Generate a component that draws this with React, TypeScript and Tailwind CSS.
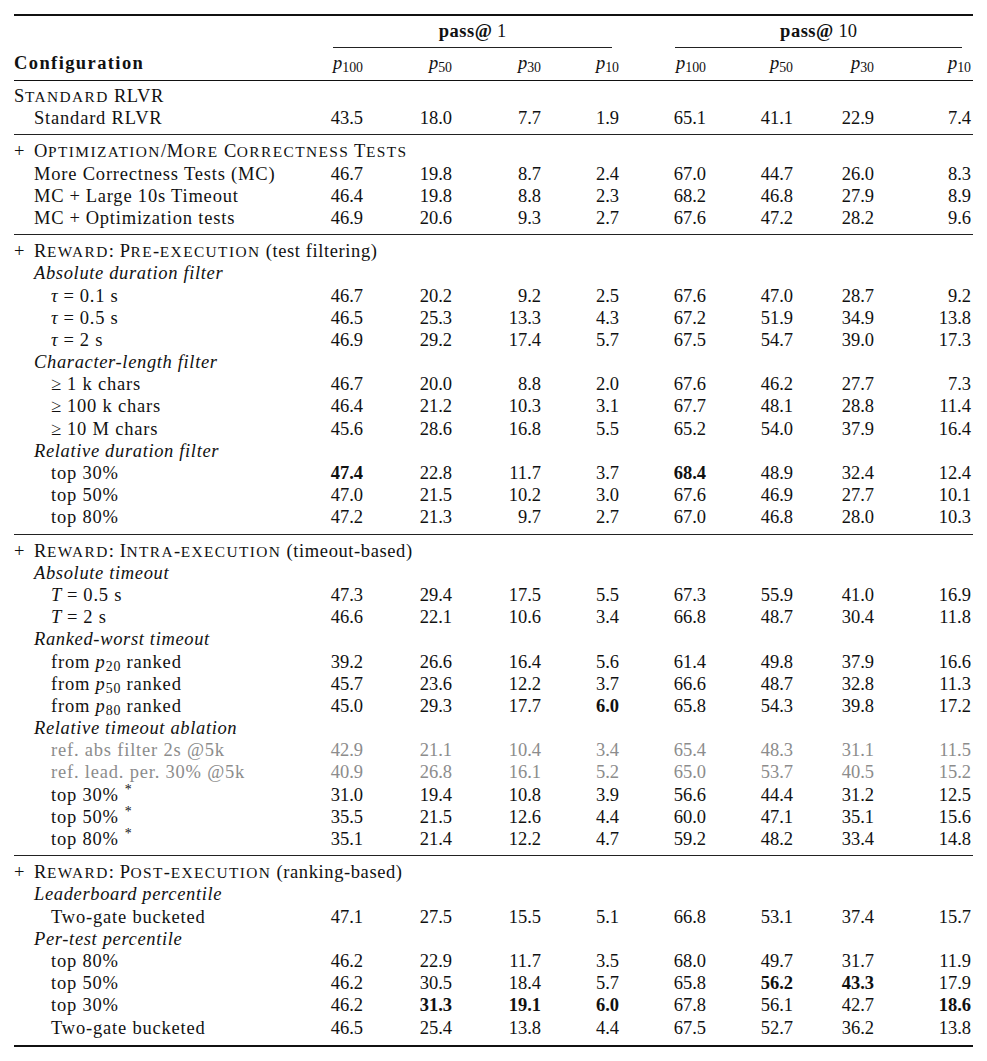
import type { ReactNode } from 'react';

type Row =
  | { k: 'sec'; label: ReactNode }
  | { k: 'sub'; label: string }
  | { k: 'row'; lvl: 1 | 2; label: ReactNode; v: string[]; gray?: boolean };

// small caps the way LaTeX \textsc draws them: lowercase letters become smaller capitals
const SC = ({ text }: { text: string }) => {
  const parts: { s: string; small: boolean }[] = [];
  for (const ch of text) {
    const small = ch !== ch.toUpperCase();
    const last = parts[parts.length - 1];
    if (last && last.small === small) last.s += ch;
    else parts.push({ s: ch, small });
  }
  return (
    <>
      {parts.map((p, i) =>
        p.small ? (
          <span key={i} className="text-[15.4px] tracking-[1.4px]">
            {p.s.toUpperCase()}
          </span>
        ) : (
          <span key={i}>{p.s}</span>
        )
      )}
    </>
  );
};

const Plus = () => <span className="mr-[9px]">+</span>;
const Eq = ({ c }: { c: string }) => <span className="mx-[5px]">{c}</span>;
const P = ({ n }: { n: string }) => (
  <span>
    <i>p</i>
    <sub>{n}</sub>
  </span>
);
const Star = () => <sup className="ml-[6px]">*</sup>;

const rows: Row[][] = [
  [
    { k: 'sec', label: <SC text="Standard RLVR" /> },
    { k: 'row', lvl: 1, label: 'Standard RLVR', v: ['43.5', '18.0', '7.7', '1.9', '65.1', '41.1', '22.9', '7.4'] },
  ],
  [
    { k: 'sec', label: <><Plus /><SC text="Optimization/More Correctness Tests" /></> },
    { k: 'row', lvl: 1, label: 'More Correctness Tests (MC)', v: ['46.7', '19.8', '8.7', '2.4', '67.0', '44.7', '26.0', '8.3'] },
    { k: 'row', lvl: 1, label: <>MC<Eq c="+" />Large 10s Timeout</>, v: ['46.4', '19.8', '8.8', '2.3', '68.2', '46.8', '27.9', '8.9'] },
    { k: 'row', lvl: 1, label: <>MC<Eq c="+" />Optimization tests</>, v: ['46.9', '20.6', '9.3', '2.7', '67.6', '47.2', '28.2', '9.6'] },
  ],
  [
    { k: 'sec', label: <><Plus /><SC text="Reward: Pre-execution" /> (test filtering)</> },
    { k: 'sub', label: 'Absolute duration filter' },
    { k: 'row', lvl: 2, label: <><i>τ</i><Eq c="=" />0.1 s</>, v: ['46.7', '20.2', '9.2', '2.5', '67.6', '47.0', '28.7', '9.2'] },
    { k: 'row', lvl: 2, label: <><i>τ</i><Eq c="=" />0.5 s</>, v: ['46.5', '25.3', '13.3', '4.3', '67.2', '51.9', '34.9', '13.8'] },
    { k: 'row', lvl: 2, label: <><i>τ</i><Eq c="=" />2 s</>, v: ['46.9', '29.2', '17.4', '5.7', '67.5', '54.7', '39.0', '17.3'] },
    { k: 'sub', label: 'Character-length filter' },
    { k: 'row', lvl: 2, label: <><span className="mr-[5px]">≥</span>1 k chars</>, v: ['46.7', '20.0', '8.8', '2.0', '67.6', '46.2', '27.7', '7.3'] },
    { k: 'row', lvl: 2, label: <><span className="mr-[5px]">≥</span>100 k chars</>, v: ['46.4', '21.2', '10.3', '3.1', '67.7', '48.1', '28.8', '11.4'] },
    { k: 'row', lvl: 2, label: <><span className="mr-[5px]">≥</span>10 M chars</>, v: ['45.6', '28.6', '16.8', '5.5', '65.2', '54.0', '37.9', '16.4'] },
    { k: 'sub', label: 'Relative duration filter' },
    { k: 'row', lvl: 2, label: 'top 30%', v: ['!47.4', '22.8', '11.7', '3.7', '!68.4', '48.9', '32.4', '12.4'] },
    { k: 'row', lvl: 2, label: 'top 50%', v: ['47.0', '21.5', '10.2', '3.0', '67.6', '46.9', '27.7', '10.1'] },
    { k: 'row', lvl: 2, label: 'top 80%', v: ['47.2', '21.3', '9.7', '2.7', '67.0', '46.8', '28.0', '10.3'] },
  ],
  [
    { k: 'sec', label: <><Plus /><SC text="Reward: Intra-execution" /> (timeout-based)</> },
    { k: 'sub', label: 'Absolute timeout' },
    { k: 'row', lvl: 2, label: <><i>T</i><Eq c="=" />0.5 s</>, v: ['47.3', '29.4', '17.5', '5.5', '67.3', '55.9', '41.0', '16.9'] },
    { k: 'row', lvl: 2, label: <><i>T</i><Eq c="=" />2 s</>, v: ['46.6', '22.1', '10.6', '3.4', '66.8', '48.7', '30.4', '11.8'] },
    { k: 'sub', label: 'Ranked-worst timeout' },
    { k: 'row', lvl: 2, label: <>from <P n="20" /> ranked</>, v: ['39.2', '26.6', '16.4', '5.6', '61.4', '49.8', '37.9', '16.6'] },
    { k: 'row', lvl: 2, label: <>from <P n="50" /> ranked</>, v: ['45.7', '23.6', '12.2', '3.7', '66.6', '48.7', '32.8', '11.3'] },
    { k: 'row', lvl: 2, label: <>from <P n="80" /> ranked</>, v: ['45.0', '29.3', '17.7', '!6.0', '65.8', '54.3', '39.8', '17.2'] },
    { k: 'sub', label: 'Relative timeout ablation' },
    { k: 'row', lvl: 2, gray: true, label: 'ref. abs filter 2s @5k', v: ['42.9', '21.1', '10.4', '3.4', '65.4', '48.3', '31.1', '11.5'] },
    { k: 'row', lvl: 2, gray: true, label: 'ref. lead. per. 30% @5k', v: ['40.9', '26.8', '16.1', '5.2', '65.0', '53.7', '40.5', '15.2'] },
    { k: 'row', lvl: 2, label: <>top 30%<Star /></>, v: ['31.0', '19.4', '10.8', '3.9', '56.6', '44.4', '31.2', '12.5'] },
    { k: 'row', lvl: 2, label: <>top 50%<Star /></>, v: ['35.5', '21.5', '12.6', '4.4', '60.0', '47.1', '35.1', '15.6'] },
    { k: 'row', lvl: 2, label: <>top 80%<Star /></>, v: ['35.1', '21.4', '12.2', '4.7', '59.2', '48.2', '33.4', '14.8'] },
  ],
  [
    { k: 'sec', label: <><Plus /><SC text="Reward: Post-execution" /> (ranking-based)</> },
    { k: 'sub', label: 'Leaderboard percentile' },
    { k: 'row', lvl: 2, label: 'Two-gate bucketed', v: ['47.1', '27.5', '15.5', '5.1', '66.8', '53.1', '37.4', '15.7'] },
    { k: 'sub', label: 'Per-test percentile' },
    { k: 'row', lvl: 2, label: 'top 80%', v: ['46.2', '22.9', '11.7', '3.5', '68.0', '49.7', '31.7', '11.9'] },
    { k: 'row', lvl: 2, label: 'top 50%', v: ['46.2', '30.5', '18.4', '5.7', '65.8', '!56.2', '!43.3', '17.9'] },
    { k: 'row', lvl: 2, label: 'top 30%', v: ['46.2', '!31.3', '!19.1', '!6.0', '67.8', '56.1', '42.7', '!18.6'] },
    { k: 'row', lvl: 2, label: 'Two-gate bucketed', v: ['46.5', '25.4', '13.8', '4.4', '67.5', '52.7', '36.2', '13.8'] },
  ],
];

const grid = 'grid grid-cols-[260px_89px_89px_89px_78px_87px_87px_81px_97px]';
const line = 'h-[22.2px] leading-[22.2px] whitespace-nowrap';

const TableRow = ({ r }: { r: Row }) => {
  if (r.k === 'sec') {
    return (
      <div className={grid}>
        <div className={`${line} col-span-9 tracking-[0.6px]`}>{r.label}</div>
      </div>
    );
  }
  if (r.k === 'sub') {
    return (
      <div className={grid}>
        <div className={`${line} col-span-9 pl-[20px] italic tracking-[0.65px]`}>{r.label}</div>
      </div>
    );
  }
  return (
    <div className={`${grid} ${r.gray ? 'text-[#8c8c8c]' : ''}`}>
      <div className={`${line} tracking-[0.8px] ${r.lvl === 1 ? 'pl-[20px]' : 'pl-[37px]'}`}>{r.label}</div>
      {r.v.map((v, i) => (
        <div key={i} className={`${line} text-right ${v.startsWith('!') ? 'font-bold' : ''}`}>
          {v.replace('!', '')}
        </div>
      ))}
    </div>
  );
};

export default function App() {
  return (
    <div className="min-h-screen bg-white text-[#111] [font-family:'Liberation_Serif','Times_New_Roman',serif] text-[18.5px]">
      <div className="ml-[14px] w-[959px] pt-[14px] pb-[12px]">
        <div className="h-[2px] bg-[#111]" />

        {/* group headers */}
        <div className={`${grid} mt-[4px]`}>
          <div />
          <div className="col-span-4 pl-[59px] pr-[7px] text-center h-[22px] leading-[22px]">
            <b className="tracking-[0.5px]">pass@</b> 1
          </div>
          <div className="col-span-4 pl-[56px] pr-[9px] text-center h-[22px] leading-[22px]">
            <b className="tracking-[0.5px]">pass@</b> 10
          </div>
        </div>
        <div className={`${grid} mt-[5px]`}>
          <div />
          <div className="col-span-4 pl-[59px] pr-[7px]">
            <div className="h-px bg-[#222]" />
          </div>
          <div className="col-span-4 pl-[56px] pr-[9px]">
            <div className="h-px bg-[#222]" />
          </div>
        </div>

        {/* column headers */}
        <div className={`${grid} mt-[4px]`}>
          <div className="h-[22px] leading-[22px] font-bold tracking-[1.4px]">Configuration</div>
          {['100', '50', '30', '10', '100', '50', '30', '10'].map((n, i) => (
            <div key={i} className="h-[22px] leading-[22px] text-right">
              <P n={n} />
            </div>
          ))}
        </div>
        <div className="mt-[6px] h-px bg-[#111]" />

        <div className="mt-[4px]">
          {rows.map((sec, si) => (
            <div key={si}>
              {si > 0 && <div className="my-[5px] h-px bg-[#222]" />}
              {sec.map((r, ri) => (
                <TableRow key={ri} r={r} />
              ))}
            </div>
          ))}
        </div>

        <div className="mt-[6px] h-[2px] bg-[#111]" />
      </div>
    </div>
  );
}
